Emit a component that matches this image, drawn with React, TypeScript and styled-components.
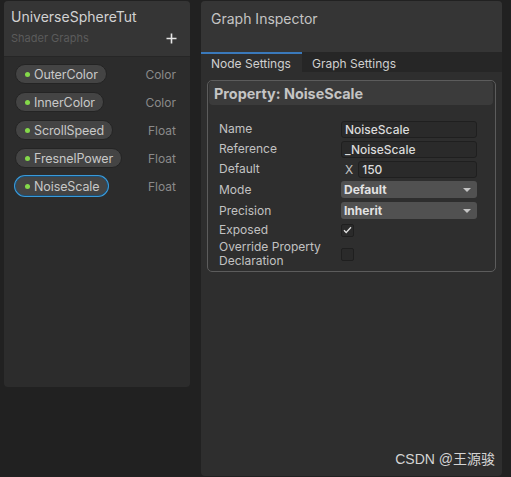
import styled, { createGlobalStyle } from 'styled-components';

const GlobalStyle = createGlobalStyle`
  html, body {
    margin: 0;
    padding: 0;
    background: #212121;
    font-family: Inter, "Noto Sans", "Noto Sans CJK SC", sans-serif;
  }
`;

const Page = styled.div`
  display: flex;
  align-items: flex-start;
  gap: 11px;
  padding: 1px 0 0 4px;
  height: 476px;
  overflow: hidden;
`;

const Blackboard = styled.div`
  width: 186px;
  height: 386px;
  background: #2c2c2c;
  border-radius: 4px;
  display: flex;
  flex-direction: column;
  overflow: hidden;
`;

const BoardHeader = styled.div`
  height: 56px;
  background: #353535;
  border-bottom: 1px solid #262626;
  padding: 7px 13px 0 7px;
  box-sizing: border-box;
  display: flex;
  flex-direction: column;
`;

const Title = styled.div`
  color: #d2d2d2;
  font-size: 14px;
  line-height: 18px;
`;

const SubRow = styled.div`
  display: flex;
  justify-content: space-between;
  align-items: center;
  margin-top: 5px;
`;

const Subtitle = styled.div`
  color: #5b5b5b;
  font-size: 11px;
  line-height: 14px;
`;

const PropList = styled.div`
  display: flex;
  flex-direction: column;
  gap: 8px;
  padding: 7px 14px 0 9px;
`;

const PropRow = styled.div`
  display: flex;
  align-items: center;
  justify-content: space-between;
  height: 20px;
`;

const Pill = styled.div<{ $selected?: boolean }>`
  display: flex;
  align-items: center;
  gap: 4px;
  height: 20px;
  box-sizing: border-box;
  padding: 0 8px 0 9px;
  margin-left: 2px;
  background: #444444;
  border: 1px solid #242424;
  border-radius: 10px;
  color: #c8c8c8;
  font-size: 12.5px;
  letter-spacing: -0.1px;
  box-shadow: ${(p) => (p.$selected ? '0 0 0 1px #3a9ad9' : 'none')};
  ${(p) => (p.$selected ? 'border-color: #1f4d70;' : '')}
`;

const Dot = styled.span`
  width: 5px;
  height: 5px;
  border-radius: 50%;
  background: #84d94a;
`;

const TypeLabel = styled.span`
  color: #8a8a8a;
  font-size: 12px;
`;

const Inspector = styled.div`
  width: 301px;
  height: 475px;
  background: #2e2e2e;
  border-radius: 4px;
  display: flex;
  flex-direction: column;
  overflow: hidden;
  position: relative;
`;

const InspectorHeader = styled.div`
  height: 51px;
  background: #353535;
  padding: 9px 10px 0 10px;
  box-sizing: border-box;
  color: #c4c4c4;
  font-size: 14px;
`;

const Tabs = styled.div`
  display: flex;
  height: 20px;
  background: #262626;
`;

const Tab = styled.div<{ $active?: boolean }>`
  display: flex;
  align-items: center;
  padding: 0 10px;
  width: ${(p) => (p.$active ? '101px' : 'auto')};
  box-sizing: border-box;
  font-size: 12px;
  color: #d0d0d0;
  background: ${(p) => (p.$active ? '#2e2e2e' : 'transparent')};
  border-top: 2px solid ${(p) => (p.$active ? '#3a79bb' : 'transparent')};
`;

const Section = styled.div`
  margin: 8px 6px 0;
  border: 1px solid #5c5c5c;
  border-radius: 5px;
  height: 192px;
  box-sizing: border-box;
  display: flex;
  flex-direction: column;
`;

const SectionHeader = styled.div`
  height: 24px;
  background: #3b3b3b;
  border-radius: 4px;
  margin: 0 0 0 1px;
  width: calc(100% - 3px);
  padding-left: 5px;
  box-sizing: border-box;
  display: flex;
  align-items: center;
  color: #c4c4c4;
  font-size: 14.4px;
  font-weight: 700;
`;

const Fields = styled.div`
  display: flex;
  flex-direction: column;
  padding: 14px 0 0 11px;
`;

const FieldRow = styled.div<{ $h?: number }>`
  display: grid;
  grid-template-columns: 122px 136px;
  align-items: center;
  height: ${(p) => p.$h ?? 20}px;
`;

const Label = styled.div`
  color: #c2c2c2;
  font-size: 12px;
  line-height: 14px;
`;

const TextInput = styled.div`
  height: 17px;
  box-sizing: border-box;
  background: #2a2a2a;
  border: 1px solid #1f1f1f;
  border-radius: 3px;
  padding-left: 3px;
  display: flex;
  align-items: center;
  color: #dadada;
  font-size: 12px;
  font-weight: 500;
`;

const VectorField = styled.div`
  display: flex;
  align-items: center;
  gap: 5px;
  padding-left: 4px;
  color: #c2c2c2;
  font-size: 12px;
`;

const Dropdown = styled.div`
  height: 17px;
  box-sizing: border-box;
  background: #515151;
  border-radius: 3px;
  padding: 0 6px 0 3px;
  display: flex;
  align-items: center;
  justify-content: space-between;
  color: #e2e2e2;
  font-size: 12px;
  font-weight: 700;
`;

const Caret = styled.span`
  width: 0;
  height: 0;
  border-left: 4px solid transparent;
  border-right: 4px solid transparent;
  border-top: 4px solid #c4c4c4;
`;

const Checkbox = styled.div`
  width: 13px;
  height: 13px;
  box-sizing: border-box;
  background: #2a2a2a;
  border: 1px solid #1f1f1f;
  border-radius: 2px;
  display: flex;
  align-items: center;
  justify-content: center;
`;

const Watermark = styled.div`
  position: absolute;
  right: 7px;
  bottom: 8px;
  color: #d4d4d4;
  font-size: 14px;
  font-family: "Liberation Sans", "Noto Sans CJK SC", sans-serif;
`;

const properties = [
  { name: 'OuterColor', type: 'Color' },
  { name: 'InnerColor', type: 'Color' },
  { name: 'ScrollSpeed', type: 'Float' },
  { name: 'FresnelPower', type: 'Float' },
  { name: 'NoiseScale', type: 'Float', selected: true },
];

const Plus = () => (
  <svg width="11" height="11" viewBox="0 0 11 11">
    <path d="M5.5 0.5v10M0.5 5.5h10" stroke="#e6e6e6" strokeWidth="1.6" />
  </svg>
);

const Check = () => (
  <svg width="9" height="8" viewBox="0 0 9 8">
    <path d="M1 4.2l2.2 2.3L8 1.2" stroke="#e0e0e0" strokeWidth="1.3" fill="none" />
  </svg>
);

export default function App() {
  return (
    <>
      <GlobalStyle />
      <Page>
        <Blackboard>
          <BoardHeader>
            <Title>UniverseSphereTut</Title>
            <SubRow>
              <Subtitle>Shader Graphs</Subtitle>
              <Plus />
            </SubRow>
          </BoardHeader>
          <PropList>
            {properties.map((p) => (
              <PropRow key={p.name}>
                <Pill $selected={p.selected}>
                  <Dot />
                  {p.name}
                </Pill>
                <TypeLabel>{p.type}</TypeLabel>
              </PropRow>
            ))}
          </PropList>
        </Blackboard>

        <Inspector>
          <InspectorHeader>Graph Inspector</InspectorHeader>
          <Tabs>
            <Tab $active>Node Settings</Tab>
            <Tab>Graph Settings</Tab>
          </Tabs>
          <Section>
            <SectionHeader>Property: NoiseScale</SectionHeader>
            <Fields>
              <FieldRow>
                <Label>Name</Label>
                <TextInput>NoiseScale</TextInput>
              </FieldRow>
              <FieldRow>
                <Label>Reference</Label>
                <TextInput>_NoiseScale</TextInput>
              </FieldRow>
              <FieldRow>
                <Label>Default</Label>
                <VectorField>
                  X
                  <TextInput style={{ flex: 1 }}>150</TextInput>
                </VectorField>
              </FieldRow>
              <FieldRow $h={21}>
                <Label>Mode</Label>
                <Dropdown>
                  Default
                  <Caret />
                </Dropdown>
              </FieldRow>
              <FieldRow $h={21}>
                <Label>Precision</Label>
                <Dropdown>
                  Inherit
                  <Caret />
                </Dropdown>
              </FieldRow>
              <FieldRow $h={18}>
                <Label>Exposed</Label>
                <Checkbox>
                  <Check />
                </Checkbox>
              </FieldRow>
              <FieldRow $h={30}>
                <Label>
                  Override Property
                  <br />
                  Declaration
                </Label>
                <Checkbox />
              </FieldRow>
            </Fields>
          </Section>
          <Watermark>CSDN @王源骏</Watermark>
        </Inspector>
      </Page>
    </>
  );
}
